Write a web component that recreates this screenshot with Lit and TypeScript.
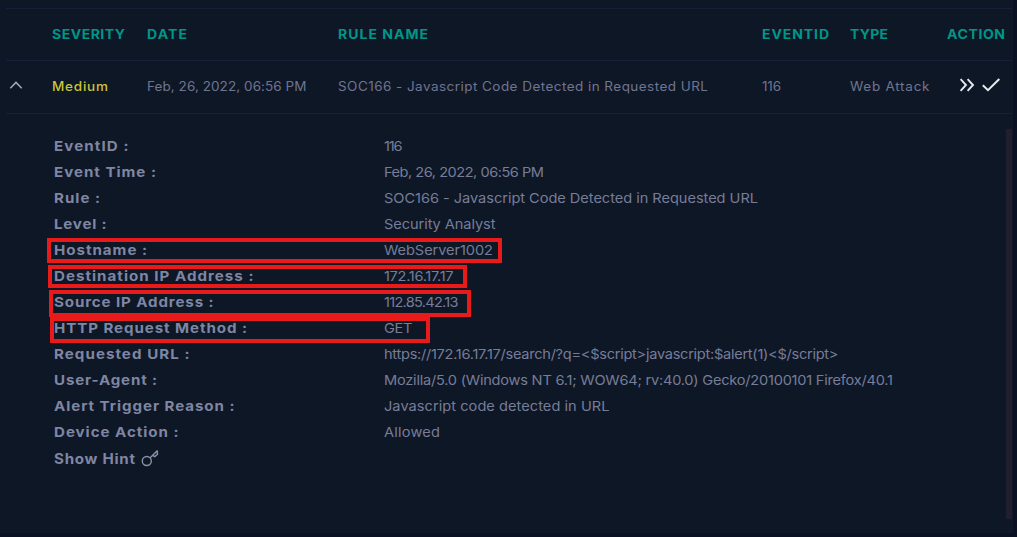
import { LitElement, html, css } from "lit";
import { customElement, property } from "lit/decorators.js";
import { styleMap } from "lit/directives/style-map.js";

/** A single line of widened text, tracked so that it spans the requested width. */
@customElement("tracked-text")
class TrackedText extends LitElement {
  @property() text = "";
  @property({ type: Number }) span = 0;
  @property({ type: Number }) stretch = 1.08;

  static styles = css`
    :host { display: inline-block; white-space: pre; }
    .line {
      display: inline-block;
      font-kerning: normal;
      font-variant-ligatures: none;
      transform-origin: 0 50%;
    }
  `;

  updated() {
    const line = this.renderRoot.querySelector(".line") as HTMLElement;
    line.style.transform = "none";
    line.style.letterSpacing = "0px";
    const natural = line.getBoundingClientRect().width;
    const gaps = Math.max(1, this.text.length - 1);
    line.style.letterSpacing = `${(this.span / this.stretch - natural) / gaps}px`;
    line.style.transform = `scaleX(${this.stretch})`;
    this.style.width = `${this.span}px`;
  }

  render() {
    return html`<span class="line">${this.text}</span>`;
  }
}

type Cell = [string, number];

const HEADERS: Cell[] = [
  ["SEVERITY", 73], ["DATE", 40], ["RULE NAME", 90], ["EVENTID", 67], ["TYPE", 38], ["ACTION", 58],
];

const ROW: Cell[] = [
  ["Medium", 56], ["Feb, 26, 2022, 06:56 PM", 159.5],
  ["SOC166 - Javascript Code Detected in Requested URL", 370],
  ["116", 19], ["Web Attack", 79.5],
];

const DETAILS: [string, number, string, number][] = [
  ["EventID :", 74.5, "116", 18.5],
  ["Event Time :", 102, "Feb, 26, 2022, 06:56 PM", 160],
  ["Rule :", 46, "SOC166 - Javascript Code Detected in Requested URL", 374],
  ["Level :", 52.5, "Security Analyst", 111.5],
  ["Hostname :", 93, "WebServer1002", 109],
  ["Destination IP Address :", 199.5, "172.16.17.17", 69.5],
  ["Source IP Address :", 159.5, "112.85.42.13", 74.5],
  ["HTTP Request Method :", 193, "GET", 28.5],
  ["Requested URL :", 135.5, "https://172.16.17.17/search/?q=<$script>javascript:$alert(1)<$/script>", 454.5],
  ["User-Agent :", 103, "Mozilla/5.0 (Windows NT 6.1; WOW64; rv:40.0) Gecko/20100101 Firefox/40.1", 509],
  ["Alert Trigger Reason :", 180.5, "Javascript code detected in URL", 225.5],
  ["Device Action :", 124.5, "Allowed", 56],
];

// Highlight frames drawn over the detail list: left, top, width, height.
const MARKS = [
  [47, 238, 455, 25],
  [48, 265, 419, 23],
  [49, 290, 422, 27],
  [50, 317, 380, 26],
];

@customElement("app-root")
class AppRoot extends LitElement {
  static styles = css`
    :host {
      display: block;
      height: 537px;
      box-sizing: border-box;
      padding: 0 4px 4px 0;
      background: #0a1122;
      position: relative;
      overflow: hidden;
      font-family: Inter, "Open Sans", sans-serif;
      color: #777d98;
    }
    .panel {
      height: 533px;
      box-sizing: border-box;
      padding: 8px 1px 0 6px;
      background: #0e1726;
    }
    .row {
      display: grid;
      grid-template-columns: 46px 95px 191px 424px 88px 97px 1fr;
      align-items: center;
      border-top: 1px solid #191e3a;
      font-size: 12.5px;
      line-height: 18px;
    }
    .head { height: 51px; font-weight: 700; color: #009688; }
    .entry { height: 52px; border-bottom: 1px solid #191e3a; color: #6f7590; }
    .severity { color: #c9c53c; font-weight: 500; }
    .caret { display: block; margin: -2px 0 0 3px; }
    .actions { display: flex; gap: 7px; align-items: center; padding: 0 0 4px 12px; }
    .body { display: flex; justify-content: space-between; padding-top: 15px; }
    .details { padding: 4px 0 0 48px; }
    .detail {
      display: grid;
      grid-template-columns: 330px auto;
      align-items: center;
      height: 26px;
      font-size: 13.5px;
      line-height: 20px;
    }
    .label { font-weight: 700; color: #7f86a3; }
    .hint {
      display: flex;
      align-items: center;
      gap: 6px;
      height: 27px;
      font-size: 14px;
      font-weight: 700;
      color: #7f86a3;
    }
    .key { margin-top: -2px; }
    .scroll { width: 6px; height: 390px; background: #211f2e; }
    .mark {
      position: absolute;
      box-sizing: border-box;
      border: 4px solid #e81a1a;
    }
  `;

  render() {
    return html`
      <div class="panel">
        <div class="row head">
          <span></span>
          ${HEADERS.map(([t, w]) => html`<tracked-text .text=${t} .span=${w} .stretch=${1.12}></tracked-text>`)}
        </div>
        <div class="row entry">
          <svg class="caret" width="14" height="10" viewBox="0 0 14 10" fill="none" stroke="#a4a8b8" stroke-width="1.5">
            <path d="M1.3 7.2 L7 1.4 L12.7 7.2" />
          </svg>
          ${ROW.map(([t, w], i) => html`<tracked-text class=${i === 0 ? "severity" : ""} .text=${t} .span=${w}></tracked-text>`)}
          <div class="actions">
            <svg width="16" height="14" viewBox="0 0 16 14" fill="none" stroke="#e6e9f0" stroke-width="1.9">
              <path d="M1.6 1.2 L7 7 L1.6 12.8 M8.6 1.2 L14 7 L8.6 12.8" />
            </svg>
            <svg width="18" height="14" viewBox="0 0 18 14" fill="none" stroke="#e6e9f0" stroke-width="2">
              <path d="M0.8 7.2 L6 12.2 L17.3 1" />
            </svg>
          </div>
        </div>
        <div class="body">
          <div class="details">
            ${DETAILS.map(([l, lw, v, vw]) => html`
              <div class="detail">
                <tracked-text class="label" .text=${l} .span=${lw} .stretch=${1.12}></tracked-text>
                <tracked-text .text=${v} .span=${vw}></tracked-text>
              </div>`)}
            <div class="hint">
              <tracked-text .text=${"Show Hint"} .span=${81} .stretch=${1.08}></tracked-text>
              <svg class="key" width="18" height="18" viewBox="0 0 18 18" fill="none" stroke="#8b91ab" stroke-width="1.4">
                <circle cx="5.8" cy="12" r="4.5" />
                <path d="M9.2 8.8 L16.2 1.8 M16.2 1.4 L16.5 5.2 L13.8 7.6 L11.6 6.4" />
              </svg>
            </div>
          </div>
          <div class="scroll"></div>
        </div>
      </div>
      ${MARKS.map(([x, y, w, h]) => html`<div class="mark" style=${styleMap({
        left: `${x}px`, top: `${y}px`, width: `${w}px`, height: `${h}px`,
      })}></div>`)}
    `;
  }
}
